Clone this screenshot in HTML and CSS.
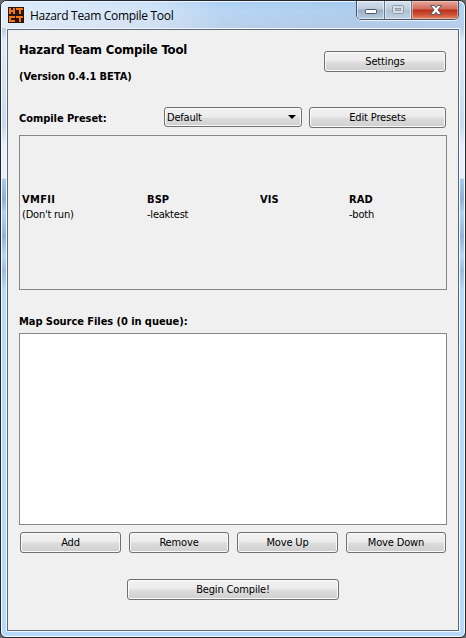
FILE: index.html
```html
<!DOCTYPE html>
<html lang="en">
<head>
<meta charset="utf-8">
<title>Hazard Team Compile Tool</title>
<link rel="stylesheet" href="styles.css">
</head>
<body>
<div class="window">
  <header class="titlebar">
    <svg class="app-icon" width="16" height="16" viewBox="0 0 16 16" shape-rendering="crispEdges">
      <rect width="16" height="16" fill="#2b1406"/>
      <path d="M1 1h2v2h2V1h2v6H5V5H3v2H1zM8 1h7v2h-2v4h-2V3H8zM1 9h6v2H3v2h4v2H1zM8 9h7v2h-2v4h-2v-4H8z" fill="#f27a10"/>
    </svg>
    <span class="caption">Hazard Team Compile Tool</span>
    <div class="controls">
      <span class="ctl ctl-min"><svg width="28" height="18" viewBox="0 0 28 18"><rect x="8.5" y="8.5" width="11" height="4" rx=".8" fill="#fff" stroke="#4b5369"/></svg></span>
      <span class="ctl ctl-max"><svg width="26" height="18" viewBox="0 0 26 18"><rect x="7.5" y="4.5" width="11" height="8" rx="1" fill="#d5dce4" stroke="#929eac"/><rect x="10.500" y="7.500" width="5" height="2" fill="#b4c2d0" stroke="#929eac"/></svg></span>
      <span class="ctl ctl-close"><svg width="46" height="18" viewBox="0 0 46 18"><path d="M18.500 4.500h3.800l1.700 2.200 1.700-2.200h3.800l-3.500 4.300 3.500 4.700h-3.800l-1.700-2.300-1.700 2.300h-3.800l3.500-4.700z" fill="#fff" stroke="#535666"/></svg></span>
    </div>
  </header>
  <main class="client">
    <section class="intro">
      <div>
        <h1>Hazard Team Compile Tool</h1>
        <p class="version">(Version 0.4.1 BETA)</p>
      </div>
      <button class="btn btn-settings">Settings</button>
    </section>
    <section class="preset">
      <label class="strong preset-label">Compile Preset:</label>
      <div class="combo"><span>Default</span><svg width="8" height="4" viewBox="0 0 8 4"><path d="M0 0h8L4 4z"/></svg></div>
      <button class="btn btn-edit">Edit Presets</button>
    </section>
    <section class="steps">
      <div><b class="wide">VMFII</b><span>(Don't run)</span></div>
      <div><b>BSP</b><span>-leaktest</span></div>
      <div><b>VIS</b></div>
      <div><b>RAD</b><span>-both</span></div>
    </section>
    <h2 class="strong queue-label">Map Source Files (0 in queue):</h2>
    <div class="file-list"></div>
    <div class="actions">
      <button class="btn">Add</button>
      <button class="btn">Remove</button>
      <button class="btn">Move Up</button>
      <button class="btn">Move Down</button>
    </div>
    <button class="btn btn-begin">Begin Compile!</button>
  </main>
</div>
</body>
</html>
```
FILE: styles.css
```css
* { box-sizing: border-box; }
html { background: #69696b; }
body { margin: 0; font: 11px/15px "DejaVu Sans Condensed", "DejaVu Sans", sans-serif; font-stretch: condensed; letter-spacing: -.22px; color: #000; }
h1, h2, p { margin: 0; }
.window {
  width: 466px; height: 638px; padding: 0 5px 5px;
  border: 1px solid #24262c; border-radius: 7px 7px 6px 6px;
  box-shadow: inset 0 0 0 1px #f4faff;
  background: linear-gradient(180deg, #a8cdf2 0, #b4d3f3 10px, #b6cde9 27px, #dfebfa 40px, #c9d9ee 125px, #e8f0fb 145px, #e8f0fb 177px, #a6caf0 178px, #8fb0d8 198px, #b0d3f7 212px, #92b4dc 235px, #b5d7f9 255px, #9abde3 270px, #b9dafa 290px, #b9d9fb 100%);
}
.titlebar { display: flex; height: 27px; margin: 0 -5px; padding: 0 6px 0 7px; background: linear-gradient(90deg, rgba(255,255,255,.6), rgba(255,255,255,.4) 32%, rgba(255,255,255,.05) 48%, rgba(145,171,209,.12) 75%, transparent); box-shadow: inset 0 1px 0 #e9f5ff; border-radius: 6px 6px 0 0; }
.app-icon { margin-top: 6px; flex: none; }
.caption { margin: 6px 0 0 6px; font: 12px/17px "Open Sans", sans-serif; letter-spacing: -.3px; white-space: nowrap; }
.controls { display: flex; width: 103px; height: 19px; margin-left: auto; border: 1px solid #47556b; border-top: 0; border-radius: 0 0 5px 5px; overflow: hidden; box-shadow: 0 1px 0 rgba(255,255,255,.75); }
.ctl { height: 18px; box-shadow: inset 0 0 0 1px rgba(255,255,255,.55); background: linear-gradient(#d5e0ed 0, #bccbdd 8px, #9baec5 9px, #b7cbe0 18px); }
.ctl svg { display: block; }
.ctl-min { width: 28px; border-right: 1px solid #65758b; }
.ctl-max { width: 27px; border-right: 1px solid #65758b; background: linear-gradient(#d6e2ee, #bdcddd 8px, #afc1d4 9px, #bfd0e3); }
.ctl-close { width: 46px; background: linear-gradient(#e6aa9f 0, #cf6a58 8px, #b7301b 9px, #cf5437 14px, #e58b6b 18px); box-shadow: inset 0 0 0 1px rgba(255,205,190,.55); }
.client { display: flex; flex-direction: column; width: 454px; height: 604px; padding: 12px 11px 0 12px; border: 1px solid #f2f9ff; box-shadow: inset 0 0 0 1px #59687a; background: #f0f0f0; background-clip: padding-box; }
.intro { display: flex; justify-content: space-between; height: 66px; }
h1 { font-size: 13px; line-height: 18px; letter-spacing: -.18px; }
.version { margin-top: 10px; font-weight: bold; letter-spacing: -.05px; }
.btn { display: flex; align-items: center; justify-content: center; height: 21px; padding: 0; border: 1px solid #707070; border-radius: 3px; font: inherit; font-stretch: condensed; letter-spacing: -.15px; color: #000; background: linear-gradient(#f2f2f2 0, #ebebeb 9px, #dddddd 10px, #cfcfcf 100%); box-shadow: inset 0 0 0 1px #fafafa; }
.btn-settings { width: 122px; margin: 10px 2px 0 0; }
.preset { display: flex; height: 28px; }
.strong { font-size: 11px; font-weight: bold; letter-spacing: -.06px; }
.preset-label { width: 145px; margin-top: 4px; }
.combo { display: flex; justify-content: space-between; width: 138px; height: 20px; padding: 2px 5px 0 2px; border: 1px solid #707070; border-radius: 3px; background: linear-gradient(#f2f2f2 0, #ebebeb 9px, #dddddd 10px, #cfcfcf 100%); box-shadow: inset 0 0 0 1px #fafafa; }
.combo svg { margin-top: 5px; }
.btn-edit { width: 137px; margin-left: 7px; }
.steps { display: grid; grid-template-columns: 125px 113px 89px 1fr; width: 428px; height: 155px; padding: 56px 0 0 2px; border: 1px solid #828790; }
.steps b, .steps span { display: block; height: 15px; white-space: nowrap; }
.steps b { letter-spacing: .1px; }
.steps .wide { letter-spacing: .35px; }
.queue-label { margin-top: 24px; height: 15px; }
.file-list { width: 428px; height: 192px; margin-top: 4px; border: 1px solid #828790; background: #fff; }
.actions { display: grid; grid-template-columns: 101px 100px 101px 100px; gap: 8px; margin: 7px 0 0 1px; }
.btn-begin { width: 212px; margin: 26px 0 0 108px; }
```
